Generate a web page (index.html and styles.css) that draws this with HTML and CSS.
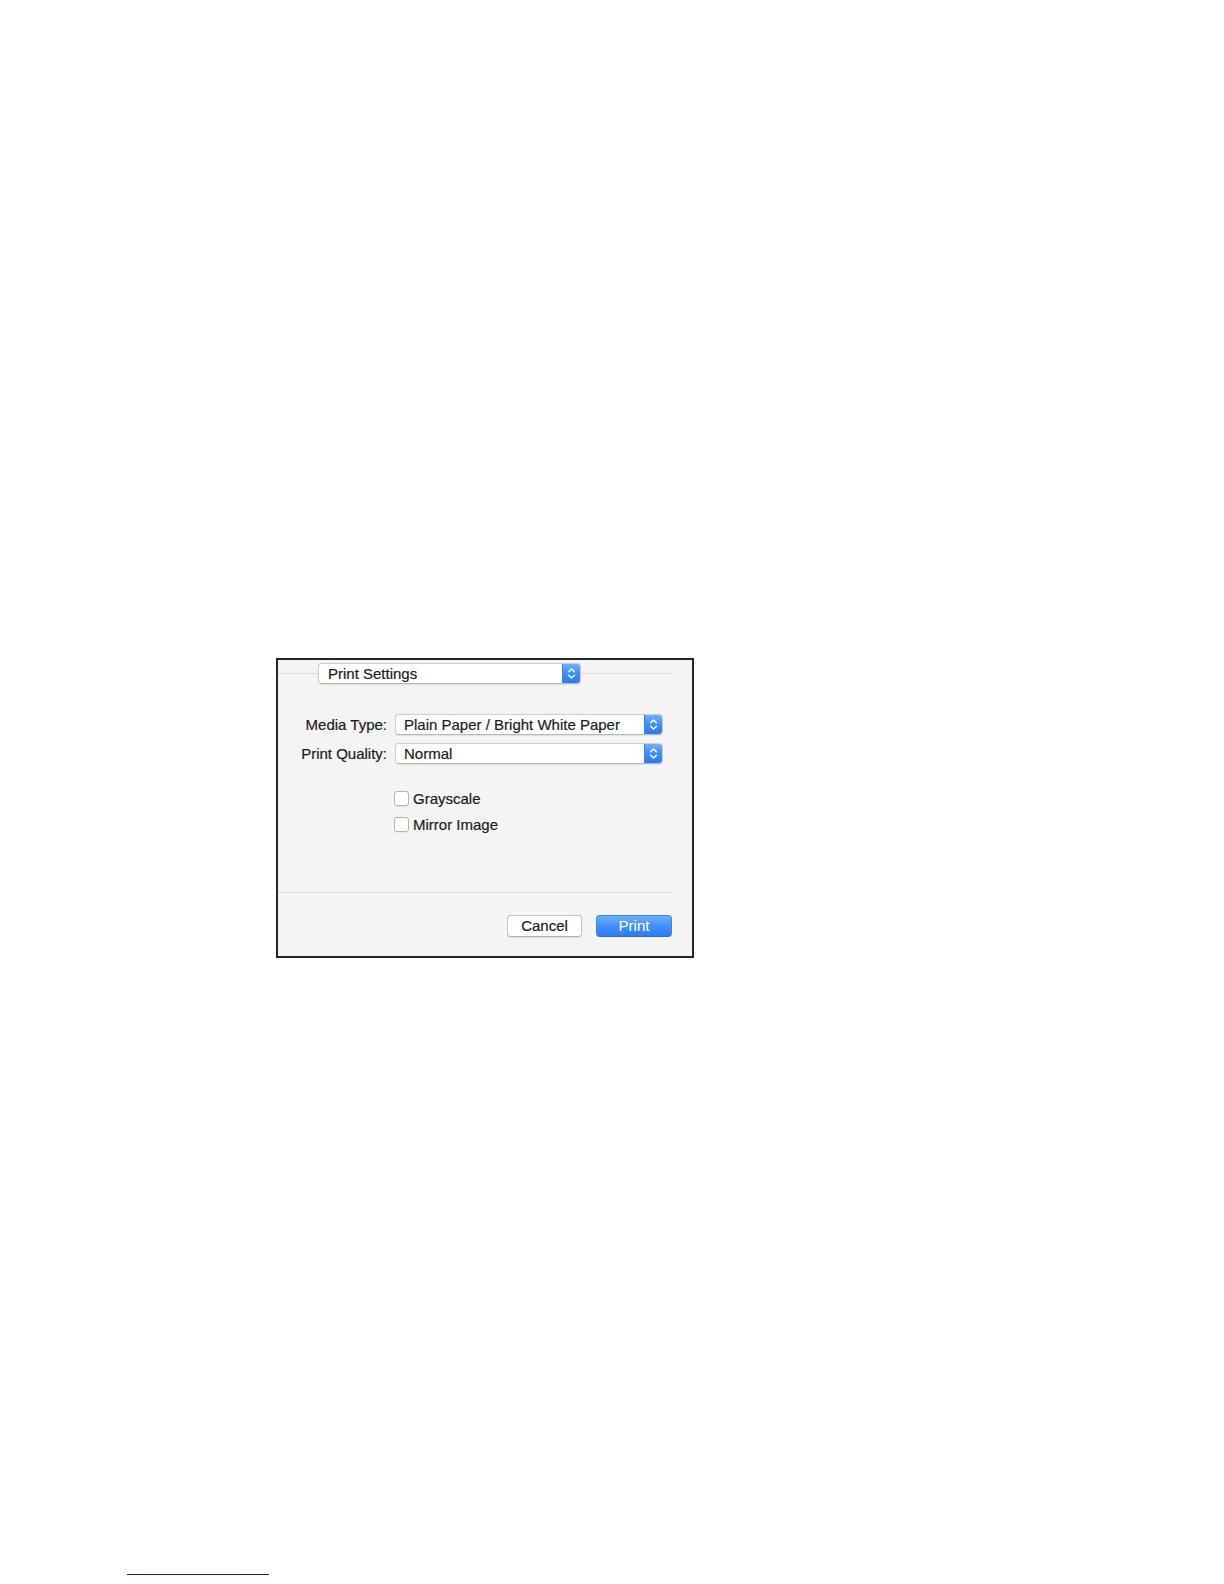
FILE: index.html
```html
<!DOCTYPE html>
<html lang="en">
<head>
<meta charset="utf-8">
<title>Print Settings</title>
<link rel="stylesheet" href="styles.css">
</head>
<body>
<div class="page">
  <div class="dialog">
    <div class="tab-row">
      <span class="rule rule-left"></span>
      <div class="popup popup-tab">
        <span class="popup-text">Print Settings</span>
        <span class="popup-arrows"><svg width="9" height="13" viewBox="0 0 9 13"><path d="M1.6 4.8 L4.5 1.9 L7.4 4.8 M1.6 8.2 L4.5 11.1 L7.4 8.2" fill="none" stroke="#fff" stroke-width="1.4" stroke-linecap="round" stroke-linejoin="round"/></svg></span>
      </div>
      <span class="rule rule-right"></span>
    </div>

    <div class="form">
      <label class="form-label">Media Type:</label>
      <div class="popup">
        <span class="popup-text">Plain Paper / Bright White Paper</span>
        <span class="popup-arrows"><svg width="9" height="13" viewBox="0 0 9 13"><path d="M1.6 4.8 L4.5 1.9 L7.4 4.8 M1.6 8.2 L4.5 11.1 L7.4 8.2" fill="none" stroke="#fff" stroke-width="1.4" stroke-linecap="round" stroke-linejoin="round"/></svg></span>
      </div>
      <label class="form-label">Print Quality:</label>
      <div class="popup">
        <span class="popup-text">Normal</span>
        <span class="popup-arrows"><svg width="9" height="13" viewBox="0 0 9 13"><path d="M1.6 4.8 L4.5 1.9 L7.4 4.8 M1.6 8.2 L4.5 11.1 L7.4 8.2" fill="none" stroke="#fff" stroke-width="1.4" stroke-linecap="round" stroke-linejoin="round"/></svg></span>
      </div>
    </div>

    <div class="checks">
      <div class="check-row"><span class="checkbox"></span><span class="check-label">Grayscale</span></div>
      <div class="check-row"><span class="checkbox"></span><span class="check-label">Mirror Image</span></div>
    </div>

    <div class="separator"></div>

    <div class="buttons">
      <button class="btn btn-cancel" type="button">Cancel</button>
      <button class="btn btn-print" type="button">Print</button>
    </div>
  </div>

  <div class="footnote-rule"></div>
</div>
</body>
</html>
```

FILE: styles.css
```css
* {
  box-sizing: border-box;
}

html, body {
  margin: 0;
  padding: 0;
  background: #ffffff;
}

body {
  font-family: "Liberation Sans", Arial, Helvetica, sans-serif;
  font-size: 15px;
  color: #1c1c1c;
  -webkit-text-stroke: 0.2px currentColor;
}

.page {
  width: 1224px;
  height: 1584px;
  padding: 658px 0 9px 0;
  display: flex;
  flex-direction: column;
  align-items: flex-start;
}

.dialog {
  margin-left: 276px;
  width: 418px;
  height: 300px;
  border: 2px solid #262626;
  background: #f4f4f4;
  padding: 3px 20px 0 0;
  display: flex;
  flex-direction: column;
}

/* top tab row with the section popup */
.tab-row {
  display: flex;
  align-items: center;
  height: 21px;
  width: 394px;
}

.rule {
  height: 1px;
  background: #dcdcdc;
}

.rule-left {
  width: 40px;
}

.rule-right {
  flex: 1;
}

.popup {
  display: flex;
  align-items: stretch;
  height: 21px;
  background: #ffffff;
  border: 1px solid #cdcdcd;
  border-bottom-color: #b9b9b9;
  border-radius: 4px;
  box-shadow: 0 0.5px 1px rgba(0, 0, 0, 0.08);
  overflow: hidden;
}

.popup-tab {
  width: 263px;
}

.popup-text {
  flex: 1;
  padding-left: 8px;
  line-height: 19px;
  white-space: nowrap;
  color: #1c1c1c;
}

.popup-tab .popup-text {
  padding-left: 9px;
}

.popup-arrows {
  width: 18px;
  display: flex;
  align-items: center;
  justify-content: center;
  background: linear-gradient(to bottom, #6fb1fb 0%, #3d8ef7 50%, #2a79f2 100%);
  border-left: 1px solid #3b83ea;
}

/* form grid */
.form {
  margin-top: 30px;
  display: grid;
  grid-template-columns: 109px 268px;
  column-gap: 8px;
  row-gap: 8px;
  align-items: center;
}

.form-label {
  text-align: right;
  white-space: nowrap;
  color: #1c1c1c;
}

/* checkboxes */
.checks {
  margin-top: 25px;
  padding-left: 116px;
  display: flex;
  flex-direction: column;
  gap: 8px;
}

.check-row {
  display: flex;
  align-items: center;
  height: 18px;
  gap: 4px;
}

.checkbox {
  width: 15px;
  height: 15px;
  background: #ffffff;
  border: 1px solid #b4b4b4;
  border-radius: 3px;
  box-shadow: 0 0.5px 1px rgba(0, 0, 0, 0.06);
}

.check-label {
  color: #1c1c1c;
  white-space: nowrap;
}

.separator {
  margin-top: 59px;
  width: 394px;
  height: 1px;
  background: #dedede;
}

/* buttons */
.buttons {
  margin-top: 22px;
  width: 394px;
  display: flex;
  justify-content: flex-end;
  gap: 14px;
}

.btn {
  height: 22px;
  padding: 0;
  font-family: "Liberation Sans", Arial, Helvetica, sans-serif;
  font-size: 15px;
  line-height: 20px;
  border-radius: 4px;
  cursor: default;
  -webkit-text-stroke: 0.2px currentColor;
}

.btn-cancel {
  width: 75px;
  background: #ffffff;
  color: #1c1c1c;
  border: 1px solid #c6c6c6;
  border-bottom-color: #b0b0b0;
  box-shadow: 0 0.5px 1px rgba(0, 0, 0, 0.08);
}

.btn-print {
  width: 76px;
  color: #ffffff;
  -webkit-text-stroke: 0;
  background: linear-gradient(to bottom, #6db0fb 0%, #4391f7 50%, #2b7cf3 100%);
  border: 1px solid #3a84ee;
  border-bottom-color: #2a6fdc;
}

.footnote-rule {
  margin-top: auto;
  margin-left: 127px;
  width: 142px;
  height: 1px;
  background: #1d1d86;
}
```
